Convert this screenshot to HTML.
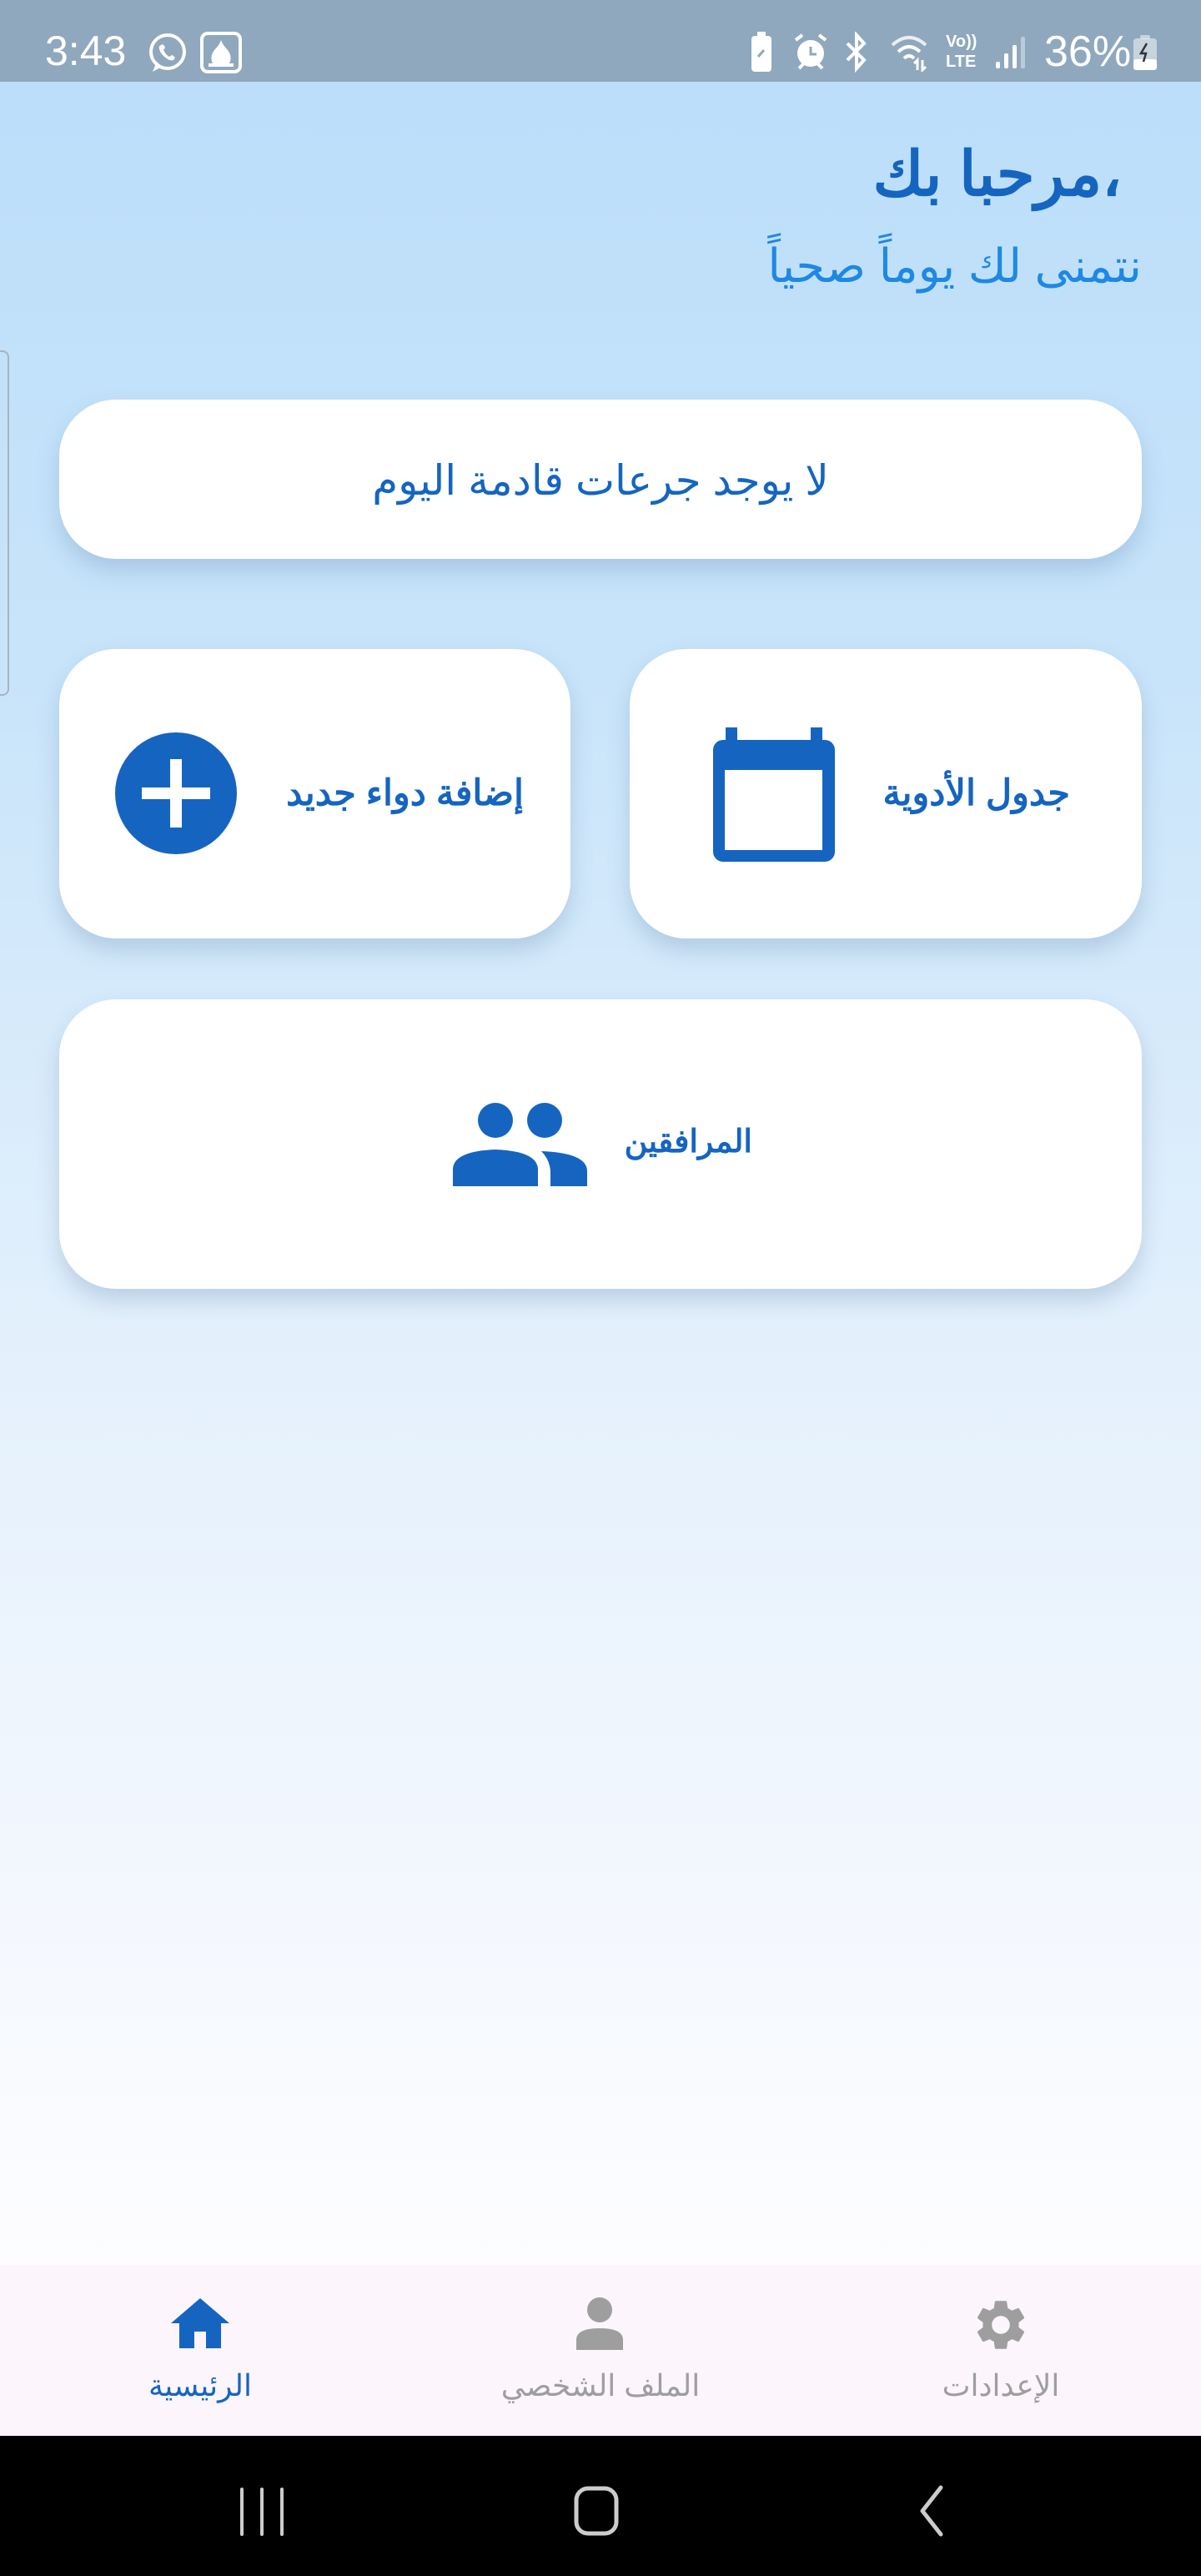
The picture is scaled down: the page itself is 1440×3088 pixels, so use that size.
<!DOCTYPE html>
<html lang="ar">
<head>
<meta charset="utf-8">
<style>
*{margin:0;padding:0;box-sizing:border-box}
html,body{width:1440px;height:3088px;overflow:hidden}
body{position:relative;font-family:"Liberation Sans","Noto Sans CJK SC",sans-serif;background:linear-gradient(180deg,#bcdefa 98px,#c8e4fa 800px,#e3f0fc 1600px,#f4f8fe 2300px,#fdfdff 2715px)}
.status{position:absolute;left:0;top:0;width:1440px;height:98px;background:#8fa8bd;color:#fff}
.abs{position:absolute}
.card{position:absolute;background:#fff;border-radius:68px;box-shadow:0 14px 26px rgba(90,130,170,.28)}
.blue{color:#1565c0}
.t{position:absolute;white-space:nowrap;direction:rtl}
.nav{position:absolute;left:0;top:2715px;width:1440px;height:205px;background:#fcf5fc}
.sys{position:absolute;left:0;top:2920px;width:1440px;height:168px;background:#000}
</style>
</head>
<body>
<div class="status">
  <div class="abs" style="left:54px;top:34px;font-size:50px;line-height:54px;font-weight:500">3:43</div>
  <svg class="abs" style="left:176px;top:38px" width="50" height="52" viewBox="0 0 50 52"><circle cx="25" cy="24" r="20" fill="none" stroke="#fff" stroke-width="4"/><path d="M7 48 L12 36 L18 42Z" fill="#fff"/><path d="M17 16 q3 -2 5 3 l-2 3 q3 6 7 8 l3 -2 q5 2 3 5 q-3 3 -8 0 q-8 -5 -10 -12 q-1 -4 2 -5z" fill="#fff"/></svg>
  <svg class="abs" style="left:240px;top:38px" width="50" height="50" viewBox="0 0 50 50"><rect x="2" y="2" width="46" height="46" rx="7" fill="none" stroke="#fff" stroke-width="4"/><path d="M25 10 q2 6 8 12 q6 8 2 16 H15 q-4 -8 2 -16 q6 -6 8 -12z" fill="#fff"/><rect x="10" y="38" width="30" height="4" fill="#fff"/></svg>
  <svg class="abs" style="left:900px;top:38px" width="26" height="50" viewBox="0 0 26 50"><rect x="8" y="0" width="10" height="6" fill="#fff"/><rect x="1" y="5" width="24" height="43" rx="4" fill="#fff"/><path d="M9 30 l7 -8" stroke="#8fa8bd" stroke-width="3"/></svg>
  <svg class="abs" style="left:950px;top:38px" width="44" height="48" viewBox="0 0 44 48"><circle cx="22" cy="26" r="16" fill="#fff"/><path d="M22 18 v9 h7" stroke="#8fa8bd" stroke-width="3" fill="none"/><path d="M4 10 l8 -6 M40 10 l-8 -6 M8 44 l5 -5 M36 44 l-5 -5" stroke="#fff" stroke-width="4"/></svg>
  <svg class="abs" style="left:1010px;top:38px" width="34" height="50" viewBox="0 0 34 50"><path d="M6 14 L26 34 L17 44 V4 L26 14 L6 34" fill="none" stroke="#fff" stroke-width="4"/></svg>
  <svg class="abs" style="left:1066px;top:40px" width="50" height="46" viewBox="0 0 50 46"><path d="M4 14 q20 -18 40 0" fill="none" stroke="#fff" stroke-width="4" opacity=".8"/><path d="M11 22 q13 -12 26 0" fill="none" stroke="#fff" stroke-width="4"/><path d="M18 30 q6 -6 12 0" fill="none" stroke="#fff" stroke-width="4"/><path d="M34 44 v-12 l-4 4 M40 32 v12 l4 -4" stroke="#fff" stroke-width="3" fill="none"/></svg>
  <div class="abs" style="left:1134px;top:38px;font-size:20px;line-height:24px;font-weight:bold">Vo))<br>LTE</div>
  <svg class="abs" style="left:1192px;top:42px" width="40" height="42" viewBox="0 0 40 42"><rect x="2" y="32" width="5" height="8" rx="2" fill="#fff"/><rect x="12" y="22" width="5" height="18" rx="2" fill="#fff"/><rect x="22" y="12" width="5" height="28" rx="2" fill="#fff"/><rect x="32" y="2" width="5" height="38" rx="2" fill="#fff" opacity=".4"/></svg>
  <div class="abs" style="left:1252px;top:34px;font-size:52px;line-height:56px;font-weight:500">36%</div>
  <svg class="abs" style="left:1358px;top:42px" width="30" height="42" viewBox="0 0 30 42"><rect x="9" y="0" width="12" height="5" rx="2" fill="#fff" opacity=".5"/><rect x="1" y="4" width="28" height="38" rx="4" fill="#fff" opacity=".5"/><rect x="1" y="29" width="28" height="13" rx="3" fill="#fff"/><path d="M17 10 l-7 12 h6 l-3 10" stroke="#333" stroke-width="2.5" fill="none"/></svg>
</div>

<div class="abs" style="left:0;top:420px;width:11px;height:414px;border:2px solid #a9b3bd;border-left:none;border-radius:0 8px 8px 0"></div>

<div class="t blue" style="right:95px;top:162px;font-size:74px;line-height:94px;font-weight:bold;direction:ltr">مرحبا بك،</div>
<div class="t" style="right:71px;top:283px;font-size:56px;line-height:72px;color:#1e88e5">نتمنى لك يوماً صحياً</div>

<div class="card" style="left:71px;top:479px;width:1298px;height:191px"></div>
<div class="t blue" style="left:0;width:1440px;top:545px;text-align:center;font-size:50px;line-height:62px;direction:rtl">لا يوجد جرعات قادمة اليوم</div>

<div class="card" style="left:71px;top:778px;width:613px;height:347px"></div>
<svg class="abs" style="left:138px;top:878px" width="146" height="146" viewBox="0 0 146 146"><circle cx="73" cy="73" r="73" fill="#1565c0"/><rect x="66" y="32" width="14" height="82" fill="#fff"/><rect x="32" y="66" width="82" height="14" fill="#fff"/></svg>
<div class="t blue" style="right:812px;top:924px;font-size:43px;line-height:54px;font-weight:bold">إضافة دواء جديد</div>

<div class="card" style="left:755px;top:778px;width:614px;height:347px"></div>
<svg class="abs" style="left:855px;top:872px" width="146" height="161" viewBox="0 0 146 161"><rect x="15" y="0" width="14" height="18" fill="#1565c0"/><rect x="117" y="0" width="14" height="18" fill="#1565c0"/><rect x="0" y="15" width="146" height="146" rx="12" fill="#1565c0"/><rect x="14" y="51" width="117" height="96" fill="#fff"/></svg>
<div class="t blue" style="right:157px;top:924px;font-size:43px;line-height:54px;font-weight:bold">جدول الأدوية</div>

<div class="card" style="left:71px;top:1198px;width:1298px;height:347px"></div>
<svg class="abs" style="left:543px;top:1320px" width="162" height="102" viewBox="0 0 162 102"><circle cx="51" cy="23" r="21" fill="#1565c0"/><circle cx="110" cy="23" r="21" fill="#1565c0"/><path d="M0 102 V82 Q0 60 51 58 Q102 60 102 82 V102Z" fill="#1565c0"/><path d="M106 60 Q161 62 161 84 V102 H117 V84 Q116 70 106 60Z" fill="#1565c0"/></svg>
<div class="t blue" style="right:538px;top:1343px;font-size:38px;line-height:52px;font-weight:bold">المرافقين</div>

<div class="nav">
  <svg class="abs" style="left:205px;top:40px" width="70" height="60" viewBox="0 0 70 60"><path d="M35 0 L70 30 H60 V60 H42 V40 H28 V60 H10 V30 H0Z" fill="#1565c0"/></svg>
  <div class="t" style="left:140px;width:200px;top:122px;text-align:center;font-size:36px;line-height:46px;color:#1565c0">الرئيسية</div>
  <svg class="abs" style="left:689px;top:38px" width="60" height="64" viewBox="0 0 60 64"><circle cx="30" cy="16" r="15" fill="#9e9e9e"/><path d="M2 64 V52 Q2 38 30 38 Q58 38 58 52 V64Z" fill="#9e9e9e"/></svg>
  <div class="t" style="left:590px;width:260px;top:122px;text-align:center;font-size:36px;line-height:46px;color:#9e9e9e">الملف الشخصي</div>
  <svg class="abs" style="left:1164px;top:36px" width="72" height="72" viewBox="0 0 24 24"><path fill="#9e9e9e" d="M19.14 12.94c.04-.3.06-.61.06-.94 0-.32-.02-.64-.07-.94l2.03-1.58a.49.49 0 0 0 .12-.61l-1.920-3.32a.488.488 0 0 0-.59-.22l-2.39.96c-.5-.38-1.03-.7-1.620-.94l-.36-2.54a.484.484 0 0 0-.48-.41h-3.84c-.24 0-.43.17-.47.41l-.36 2.54c-.59.24-1.130.57-1.620.94l-2.39-.96c-.22-.08-.47 0-.59.22L2.74 8.87c-.12.21-.08.47.12.61l2.03 1.58c-.05.3-.09.63-.09.94s.02.64.07.94l-2.03 1.58a.49.49 0 0 0-.12.61l1.92 3.32c.12.22.37.29.59.22l2.39-.96c.5.38 1.03.7 1.62.94l.36 2.54c.05.24.24.41.48.41h3.84c.24 0 .44-.17.47-.41l.36-2.54c.59-.24 1.13-.56 1.62-.94l2.39.96c.22.08.47 0 .59-.22l1.92-3.32c.12-.22.07-.47-.12-.61l-2.01-1.58zM12 15.6c-1.98 0-3.6-1.62-3.6-3.6s1.62-3.6 3.6-3.6 3.6 1.62 3.6 3.6-1.62 3.6-3.6 3.6z"/></svg>
  <div class="t" style="left:1100px;width:200px;top:122px;text-align:center;font-size:36px;line-height:46px;color:#9e9e9e">الإعدادات</div>
</div>

<div class="sys">
  <svg class="abs" style="left:284px;top:60px" width="60" height="62" viewBox="0 0 60 62"><path d="M6 4 V58 M30 4 V58 M54 4 V58" stroke="#ccc" stroke-width="4" stroke-linecap="round"/></svg>
  <svg class="abs" style="left:688px;top:60px" width="54" height="60" viewBox="0 0 54 60"><rect x="3" y="3" width="48" height="54" rx="14" fill="none" stroke="#ccc" stroke-width="5"/></svg>
  <svg class="abs" style="left:1098px;top:58px" width="36" height="64" viewBox="0 0 36 64"><path d="M30 4 L8 32 L30 60" fill="none" stroke="#ccc" stroke-width="5" stroke-linecap="round" stroke-linejoin="round"/></svg>
</div>
</body>
</html>
